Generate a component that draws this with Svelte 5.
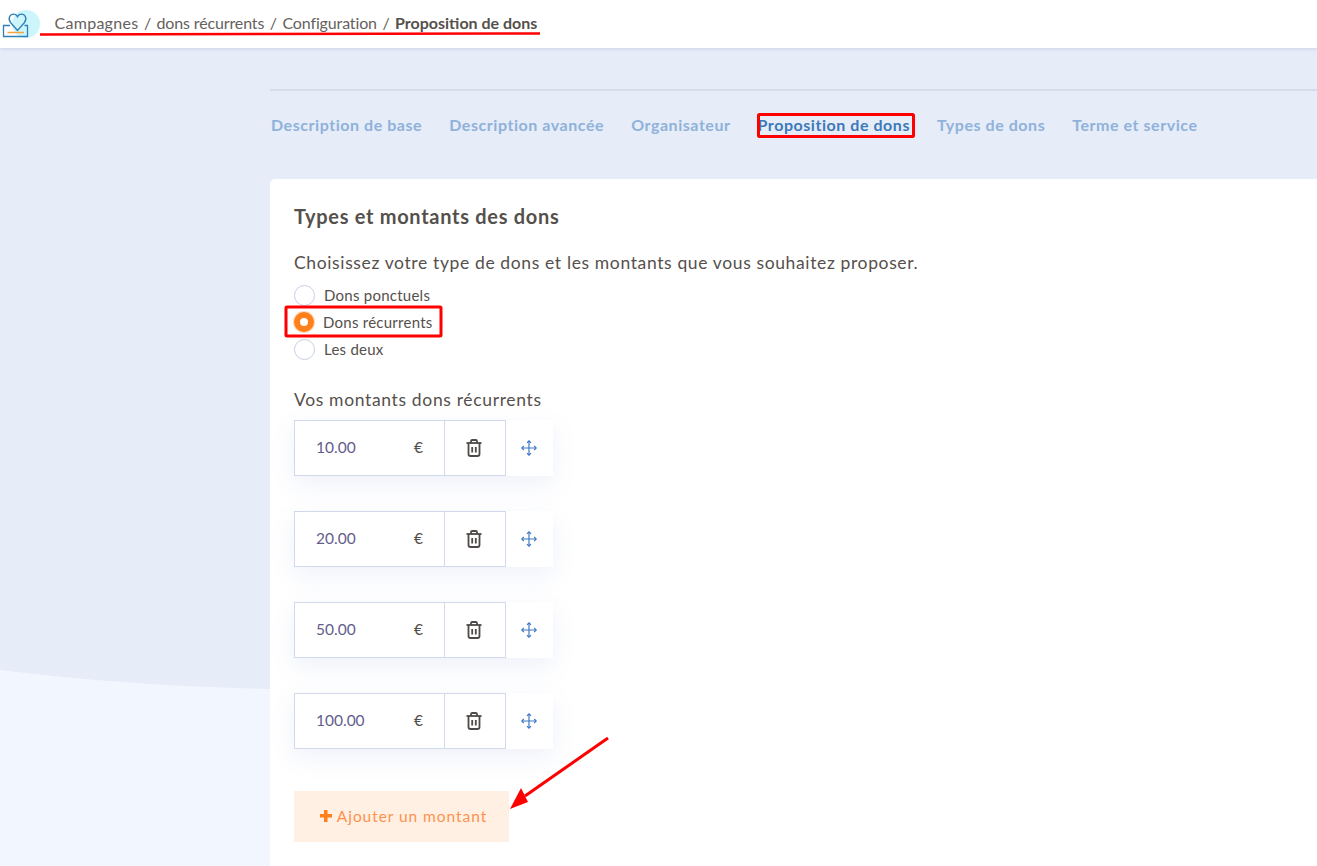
<script>
  const crumbs = ['Campagnes', 'dons récurrents', 'Configuration'];
  const tabs = ['Description de base', 'Description avancée', 'Organisateur', 'Proposition de dons', 'Types de dons', 'Terme et service'];
  const radios = [
    { label: 'Dons ponctuels', checked: false },
    { label: 'Dons récurrents', checked: true },
    { label: 'Les deux', checked: false }
  ];
  const amounts = ['10.00', '20.00', '50.00', '100.00'];
</script>

<div class="page">
  <svg class="wave" viewBox="0 0 270 196" preserveAspectRatio="none" aria-hidden="true">
    <path d="M0 0 C90 11 180 17 270 19 V196 H0 Z" fill="#f2f6fe" />
  </svg>

  <header class="topbar">
    <svg class="logo" width="42" height="40" viewBox="0 0 42 40" aria-hidden="true">
      <circle cx="26" cy="24" r="14" fill="#cdf5fc" />
      <path d="M10 25.500 H3.500 V36.500 H27.500 V25.500 H24.500" fill="none" stroke="#2f7fb8" stroke-width="1.300" />
      <path d="M17.500 30.500 L10.500 22.500 C7.500 18.500 10 14.200 13.500 14.200 C15.300 14.200 16.800 15.300 17.500 16.800 C18.200 15.300 19.700 14.200 21.500 14.200 C25 14.200 27.500 18.500 24.500 22.500 Z" fill="none" stroke="#2f7fb8" stroke-width="1.300" />
      <path d="M7.500 32.500 H24" stroke="#f5a53d" stroke-width="1.500" />
    </svg>
    <nav class="crumbs">
      {#each crumbs as crumb}
        <span class="crumb">{crumb}</span><span class="sep">/</span>
      {/each}
      <strong>Proposition de dons</strong>
    </nav>
  </header>

  <main class="main">
    <div class="rule"></div>
    <nav class="tabs">
      {#each tabs as tab}
        <span class="tab" class:active={tab === 'Proposition de dons'}>{tab}</span>
      {/each}
    </nav>

    <section class="card">
      <h2>Types et montants des dons</h2>
      <p class="intro">Choisissez votre type de dons et les montants que vous souhaitez proposer.</p>

      <div class="radios">
        {#each radios as radio}
          <div class="radio-row">
            <span class="radio" class:checked={radio.checked}></span>
            <span>{radio.label}</span>
          </div>
        {/each}
      </div>

      <h3>Vos montants dons récurrents</h3>

      <div class="amounts">
        {#each amounts as amount}
          <div class="amount">
            <div class="field"><span class="value">{amount}</span><span class="euro">€</span></div>
            <div class="trash">
              <svg width="16" height="18" viewBox="0 0 16 18" fill="none" stroke="#4d4a48" stroke-width="1.800" aria-hidden="true">
                <path d="M0.500 4 H15.500" />
                <path d="M5 4 V2.300 Q5 1 6.300 1 H9.700 Q11 1 11 2.300 V4" />
                <path d="M2.500 4 V15 Q2.500 17 4.500 17 H11.500 Q13.500 17 13.500 15 V4" />
                <path d="M6.200 8 V13.500 M9.800 8 V13.500" />
              </svg>
            </div>
            <div class="move">
              <svg width="16" height="16" viewBox="0 0 16 16" fill="none" stroke="#3f78c4" stroke-width="1.200" aria-hidden="true">
                <path d="M8 1 V15 M1 8 H15" />
                <path d="M6 2.800 L8 0.800 L10 2.800 M6 13.200 L8 15.200 L10 13.200 M2.800 6 L0.800 8 L2.800 10 M13.200 6 L15.200 8 L13.200 10" />
              </svg>
            </div>
          </div>
        {/each}
      </div>

      <button class="add" type="button"><span class="plus"></span>Ajouter un montant</button>
    </section>
  </main>

  <svg class="marks" width="1317" height="866" viewBox="0 0 1317 866" aria-hidden="true">
    <path d="M40 34.500 L540 33.500" stroke="#f00" stroke-width="2.500" fill="none" />
    <rect x="758.500" y="114.500" width="155" height="22" stroke="#f00" stroke-width="3" fill="none" rx="1" />
    <rect x="286" y="307" width="155" height="29" stroke="#f00" stroke-width="3" fill="none" rx="1" />
    <path d="M608 738 L525 796" stroke="#f00" stroke-width="3" fill="none" />
    <path d="M510 809 L521 788 L528 802 Z" fill="#f00" />
  </svg>
</div>

<style>
  :global(body) {
    margin: 0;
    background: #e6ecf8;
  }

  .page {
    position: relative;
    width: 1317px;
    height: 866px;
    overflow: hidden;
    background: #e6ecf8;
    font-family: "Lato", "Open Sans", sans-serif;
    color: #55504c;
  }

  .wave {
    position: absolute;
    left: 0;
    top: 670px;
    width: 270px;
    height: 196px;
  }

  .marks {
    position: absolute;
    inset: 0;
    pointer-events: none;
  }

  .topbar {
    position: relative;
    height: 48px;
    display: flex;
    align-items: center;
    background: #fff;
    box-shadow: 0 1px 3px rgba(60, 80, 130, 0.16);
  }

  .logo {
    flex: none;
    margin-right: 12.500px;
    align-self: flex-start;
  }

  .crumbs {
    display: flex;
    gap: 5.500px;
    font-size: 16px;
    line-height: 20px;
    letter-spacing: -0.130px;
    color: #66615d;
    margin-bottom: 2px;
  }

  .crumb:first-child {
    letter-spacing: 0.280px;
  }

  .crumbs strong {
    font-weight: 700;
    letter-spacing: 0;
    color: #55504c;
  }

  .main {
    position: relative;
    padding: 41px 0 0 270px;
  }

  .rule {
    height: 2px;
    background: #d5dcea;
  }

  .tabs {
    display: flex;
    gap: 27px;
    padding: 25px 0 0 1px;
    height: 62px;
    box-sizing: border-box;
    font-size: 16px;
    font-weight: 700;
    letter-spacing: 0.550px;
    line-height: 18px;
    color: #8fb2da;
  }

  .tab.active {
    color: #3c79b8;
  }

  .card {
    height: 760px;
    margin-top: 26px;
    padding: 25px 24px;
    background: #fff;
    border-radius: 5px 0 0 0;
    box-sizing: border-box;
  }

  h2 {
    margin: 0;
    font-size: 20px;
    line-height: 24px;
    font-weight: 700;
    letter-spacing: 0.700px;
    color: #55504c;
  }

  .intro {
    margin: 23px 0 0;
    font-size: 17.500px;
    line-height: 24px;
    letter-spacing: 0.630px;
  }

  .radios {
    margin-top: 10px;
    display: flex;
    flex-direction: column;
    gap: 7px;
    font-size: 15px;
    letter-spacing: 0.250px;
  }

  .radio-row {
    display: flex;
    align-items: center;
    gap: 9px;
    height: 20px;
  }

  .radio {
    width: 19px;
    height: 19px;
    border: 1px solid #c8cfe0;
    border-radius: 50%;
    background: #fff;
    flex: none;
  }

  .radio.checked {
    width: 8px;
    height: 8px;
    border: 6.500px solid #ff7f1a;
    box-shadow: 0 0 0 1px #ffd9bb;
  }

  h3 {
    margin: 29px 0 0;
    font-size: 17.500px;
    line-height: 24px;
    font-weight: 400;
    letter-spacing: 0.650px;
    color: #55504c;
  }

  .amounts {
    margin-top: 8px;
    display: flex;
    flex-direction: column;
    gap: 35px;
  }

  .amount {
    display: flex;
    width: 259px;
    height: 56px;
    box-shadow: 0 8px 24px rgba(90, 120, 200, 0.1);
  }

  .field,
  .trash,
  .move {
    display: flex;
    align-items: center;
    box-sizing: border-box;
    background: #fff;
  }

  .field {
    width: 151px;
    padding: 0 21px 2px;
    justify-content: space-between;
    border: 1px solid #d0daec;
    font-size: 15.500px;
  }

  .value {
    color: #635d8c;
  }

  .trash {
    width: 61px;
    padding-right: 2px;
    justify-content: center;
    border: 1px solid #d0daec;
    border-left: 0;
  }

  .move {
    width: 47px;
    padding-right: 2px;
    justify-content: center;
  }

  .add {
    display: flex;
    align-items: center;
    justify-content: center;
    gap: 5px;
    width: 215px;
    height: 51px;
    margin-top: 42px;
    padding: 0 0 2px 4px;
    border: 0;
    background: #fff0e3;
    color: #ff914d;
    font: inherit;
    font-size: 15.500px;
    letter-spacing: 0.950px;
  }

  .plus {
    width: 12px;
    height: 12px;
    background:
      linear-gradient(#ff7f1a, #ff7f1a) center / 12px 3.500px no-repeat,
      linear-gradient(#ff7f1a, #ff7f1a) center / 3.500px 12px no-repeat;
  }
</style>
